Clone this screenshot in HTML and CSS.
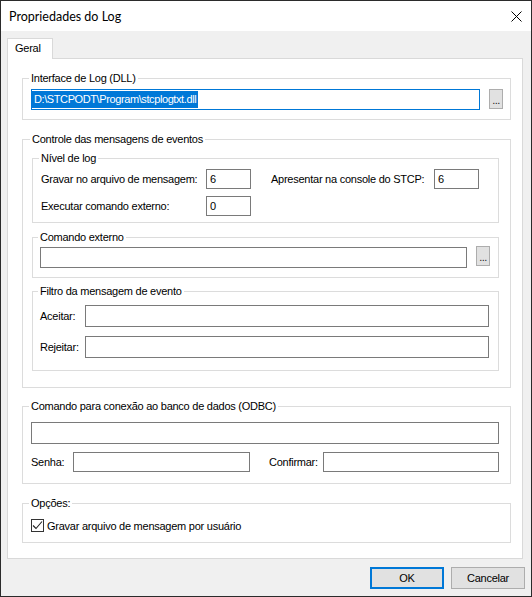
FILE: index.html
```html
<!DOCTYPE html>
<html>
<head>
<meta charset="utf-8">
<title>Propriedades do Log</title>
<link rel="stylesheet" href="styles.css">
</head>
<body>
<div class="window">
  <div class="titlebar">
    <span class="title">Propriedades do Log</span>
    <svg class="close" width="11" height="11" viewBox="0 0 11 11"><path d="M0.5 0.5L10.5 10.5M10.5 0.5L0.5 10.5" stroke="#000" stroke-width="1" fill="none"/></svg>
  </div>
  <div class="client">
    <div class="tabs">
      <div class="tab">Geral</div>
      <div class="tabfill"></div>
    </div>
    <div class="panel">
      <fieldset class="g g-dll">
        <legend>Interface de Log (DLL)</legend>
        <div class="row top">
          <div class="input focus w-dll"><span class="sel">D:\STCPODT\Program\stcplogtxt.dll</span></div>
          <div class="dots">...</div>
        </div>
      </fieldset>

      <fieldset class="g g-ctrl">
        <legend>Controle das mensagens de eventos</legend>

        <fieldset class="g g-nivel">
          <legend>Nível de log</legend>
          <div class="row">
            <span class="lbl w-lbl1">Gravar no arquivo de mensagem:</span>
            <div class="input small">6</div>
            <span class="lbl w-lbl2">Apresentar na console do STCP:</span>
            <div class="input small">6</div>
          </div>
          <div class="row row2">
            <span class="lbl w-lbl1">Executar comando externo:</span>
            <div class="input small">0</div>
          </div>
        </fieldset>

        <fieldset class="g g-cmd">
          <legend>Comando externo</legend>
          <div class="row top">
            <div class="input w-cmd"></div>
            <div class="dots up">...</div>
          </div>
        </fieldset>

        <fieldset class="g g-filtro">
          <legend>Filtro da mensagem de evento</legend>
          <div class="row">
            <span class="lbl w-lbl3">Aceitar:</span>
            <div class="input tall w-filtro"></div>
          </div>
          <div class="row row3">
            <span class="lbl w-lbl3">Rejeitar:</span>
            <div class="input tall w-filtro"></div>
          </div>
        </fieldset>
      </fieldset>

      <fieldset class="g g-odbc">
        <legend>Comando para conexão ao banco de dados (ODBC)</legend>
        <div class="row">
          <div class="input tall w-odbc"></div>
        </div>
        <div class="row row4">
          <span class="lbl w-senha">Senha:</span>
          <div class="input w-pass1"></div>
          <span class="lbl w-conf">Confirmar:</span>
          <div class="input w-pass2"></div>
        </div>
      </fieldset>

      <fieldset class="g g-opt">
        <legend>Opções:</legend>
        <div class="row chkrow">
          <span class="chk"><svg width="11" height="11" viewBox="0 0 11 11"><path d="M1 5.5L4 8.5L10 1.5" stroke="#222" stroke-width="1.1" fill="none"/></svg></span>
          <span class="lbl">Gravar arquivo de mensagem por usuário</span>
        </div>
      </fieldset>
    </div>
    <div class="buttons">
      <div class="btn default">OK</div>
      <div class="btn">Cancelar</div>
    </div>
  </div>
</div>
</body>
</html>
```

FILE: styles.css
```css
html, body {
  margin: 0;
  padding: 0;
}
body {
  width: 532px;
  height: 597px;
  font-family: "Liberation Sans", Arial, sans-serif;
  font-size: 11px;
  letter-spacing: -0.25px;
  color: #000;
  background: #fff;
  overflow: hidden;
}
.window {
  box-sizing: border-box;
  width: 532px;
  height: 597px;
  border: 1px solid #2b2b2b;
  display: flex;
  flex-direction: column;
  background: #f0f0f0;
}
.titlebar {
  height: 30px;
  flex: none;
  background: #fff;
  display: flex;
  align-items: center;
  justify-content: space-between;
  padding: 0 9px 0 8px;
}
.title {
  font-family: Lato, "Noto Sans", sans-serif;
  font-size: 12.5px;
  letter-spacing: 0;
  color: #000;
}
.close {
  display: block;
}
.client {
  flex: 1;
  padding: 7px 6px 0 6px;
  display: flex;
  flex-direction: column;
}
.tabs {
  display: flex;
  margin-right: 2px;
  height: 21px;
}
.tab {
  box-sizing: border-box;
  width: 46px;
  height: 21px;
  background: #fff;
  border: 1px solid #d9d9d9;
  border-bottom: none;
  padding-left: 7px;
  line-height: 19px;
}
.tabfill {
  flex: 1;
  border-bottom: 1px solid #d9d9d9;
}
.panel {
  box-sizing: border-box;
  height: 500px;
  margin-right: 2px;
  background: #fff;
  border: 1px solid #d9d9d9;
  border-top: none;
  padding: 13px 11px 0 14px;
  display: flex;
  flex-direction: column;
}
fieldset.g {
  margin: 0;
  min-width: 0;
  border: 1px solid #dcdcdc;
}
fieldset.g > legend {
  padding: 0 2px;
  margin-left: -2px;
  line-height: 13px;
  height: 13px;
}
.g-dll { padding: 4px 7px 9px 8px; }
.g-ctrl { margin-top: 13px !important; padding: 6px 11px 16px 9px; }
.g-nivel { padding: 4px 8px 6px 8px; }
.g-cmd { margin-top: 8px !important; padding: 3px 8px 9px 7px; }
.g-filtro { margin-top: 7px !important; padding: 7px 9px 12px 7px; }
.g-odbc { margin-top: 12px !important; padding: 9px 11px 11px 8px; }
.g-opt { margin-top: 13px !important; padding: 8px 8px 9px 8px; }

.row {
  display: flex;
  align-items: center;
}
.row.top { align-items: flex-start; }
.row2 { margin-top: 7px; }
.row3 { margin-top: 9px; }
.row4 { margin-top: 8px; }
.lbl { white-space: nowrap; }
.w-lbl1 { width: 165px; flex: none; }
.w-lbl2 { width: 163px; flex: none; margin-left: 20px; }
.w-lbl3 { width: 45px; flex: none; }
.w-senha { width: 42px; flex: none; }
.w-conf { width: 54px; flex: none; margin-left: 19px; }

.input {
  box-sizing: border-box;
  flex: none;
  height: 21px;
  background: #fff;
  border: 1px solid #7a7a7a;
  padding-left: 3px;
  line-height: 19px;
  white-space: nowrap;
  overflow: hidden;
}
.input.small { width: 45px; height: 20px; line-height: 18px; }
.input.tall { height: 22px; line-height: 20px; }
.input.focus {
  border-color: #0078d7;
  padding: 1px 0 0 0;
  line-height: 17px;
}
.sel {
  display: inline-block;
  background: #0078d7;
  color: #fff;
  padding: 0 2px 0 2px;
  letter-spacing: -0.4px;
  line-height: 17px;
  height: 17px;
  vertical-align: top;
}
.w-dll { width: 449px; }
.w-cmd { width: 427px; }
.w-filtro { width: 404px; }
.w-odbc { width: 468px; }
.w-pass1 { width: 177px; height: 20px; line-height: 18px; }
.w-pass2 { width: 176px; height: 20px; line-height: 18px; }

.dots {
  box-sizing: border-box;
  flex: none;
  width: 14px;
  height: 20px;
  margin-left: 9px;
  background: #e1e1e1;
  border: 1px solid #adadad;
  text-align: center;
  line-height: 20px;
  font-size: 11px;
  letter-spacing: -0.5px;
  color: #222;
}
.dots.up { margin-top: -1px; }

.chkrow { height: 15px; }
.chk {
  box-sizing: border-box;
  width: 13px;
  height: 13px;
  border: 1px solid #333;
  background: #fff;
  display: flex;
  align-items: center;
  justify-content: center;
  flex: none;
  margin-right: 3px;
}
.chk svg { display: block; }

.buttons {
  display: flex;
  justify-content: flex-end;
  gap: 7px;
  margin-top: 8px;
}
.btn {
  box-sizing: border-box;
  width: 74px;
  height: 22px;
  background: #e1e1e1;
  border: 1px solid #adadad;
  text-align: center;
  line-height: 20px;
  font-size: 11px;
}
.btn.default {
  border: 2px solid #0078d7;
  line-height: 18px;
}
```
